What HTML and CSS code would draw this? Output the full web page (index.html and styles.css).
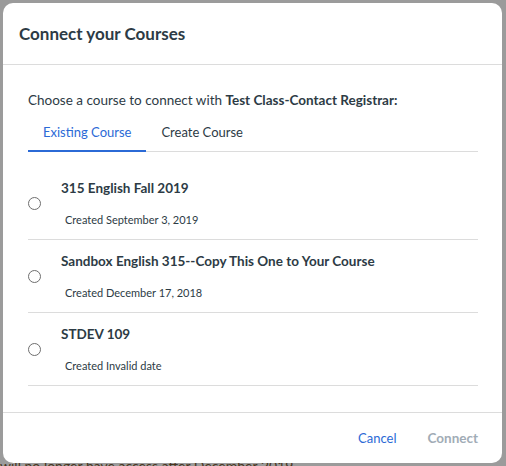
FILE: index.html
```html
<!DOCTYPE html>
<html>
<head>
<meta charset="utf-8">
<link rel="stylesheet" href="styles.css">
</head>
<body>
<div class="backdrop">
  <div class="bg-text">will no longer have access after December 2019</div>
  <div class="modal">
    <div class="modal-header">Connect your Courses</div>
    <div class="modal-body">
      <p class="intro">Choose a course to connect with <strong>Test Class-Contact Registrar:</strong></p>
      <div class="tabs">
        <div class="tab active">Existing Course</div>
        <div class="tab">Create Course</div>
      </div>
      <ul class="courses">
        <li class="course">
          <span class="radio"></span>
          <div class="info">
            <div class="title">315 English Fall 2019</div>
            <div class="date">Created September 3, 2019</div>
          </div>
        </li>
        <li class="course">
          <span class="radio"></span>
          <div class="info">
            <div class="title">Sandbox English 315--Copy This One to Your Course</div>
            <div class="date">Created December 17, 2018</div>
          </div>
        </li>
        <li class="course">
          <span class="radio"></span>
          <div class="info">
            <div class="title">STDEV 109</div>
            <div class="date">Created Invalid date</div>
          </div>
        </li>
      </ul>
    </div>
    <div class="modal-footer">
      <button class="btn cancel">Cancel</button>
      <button class="btn connect">Connect</button>
    </div>
  </div>
</div>
</body>
</html>
```

FILE: styles.css
```css
* { box-sizing: border-box; }
html, body { margin: 0; padding: 0; }
body {
  width: 506px;
  height: 466px;
  overflow: hidden;
  font-family: Lato, "Liberation Sans", sans-serif;
  color: #2d3b45;
}
.backdrop {
  position: relative;
  width: 506px;
  height: 466px;
  background: #9b9b9b;
  padding: 3px 4px 0 3px;
}
.bg-text {
  position: absolute;
  left: 0;
  bottom: -8px;
  font-size: 14px;
  color: #4a3520;
  white-space: nowrap;
}
.modal {
  position: relative;
  background: #fff;
  border-radius: 10px;
  width: 499px;
  height: 460px;
  display: flex;
  flex-direction: column;
}
.modal-header {
  height: 62px;
  padding: 0 16px;
  display: flex;
  align-items: center;
  font-size: 17px;
  font-weight: 700;
  border-bottom: 1px solid #dcdcdc;
}
.modal-body {
  flex: 1;
  padding: 0 24px 0 25px;
}
.intro {
  margin: 26px 0 0;
  font-size: 13.5px;
  line-height: 18px;
}
.intro strong { font-weight: 700; }
.tabs {
  display: flex;
  margin-top: 5px;
  border-bottom: 1px solid #dcdcdc;
}
.tab {
  font-size: 13px;
  line-height: 18px;
  padding: 9px 15px 10px;
  margin-bottom: -1px;
}
.tab.active {
  color: #2b6ad6;
  border-bottom: 2px solid #2b6ad6;
  padding-bottom: 9px;
}
.courses {
  list-style: none;
  margin: 0;
  padding: 0;
}
.course {
  display: flex;
  align-items: center;
  height: 73px;
  border-bottom: 1px solid #dcdcdc;
}
.course:first-child { height: 88px; padding-top: 16px; }
.radio {
  width: 13px;
  height: 13px;
  border: 1px solid #6e6e6e;
  border-radius: 50%;
  margin-right: 20px;
  flex-shrink: 0;
}
.info { display: flex; flex-direction: column; }
.title {
  font-size: 13.5px;
  font-weight: 700;
  line-height: 18px;
}
.date {
  font-size: 11px;
  line-height: 16px;
  margin-top: 15px;
  padding-left: 4px;
}
.modal-footer {
  height: 51px;
  border-top: 1px solid #dcdcdc;
  display: flex;
  justify-content: flex-end;
  align-items: center;
  padding: 0 24px 0 0;
  gap: 31px;
}
.btn {
  background: none;
  border: none;
  padding: 0;
  font-family: Lato, "Liberation Sans", sans-serif;
  font-size: 13px;
}
.cancel { color: #2b6ad6; }
.connect { color: #a1acb6; font-weight: 700; font-size: 13.5px; }
```
